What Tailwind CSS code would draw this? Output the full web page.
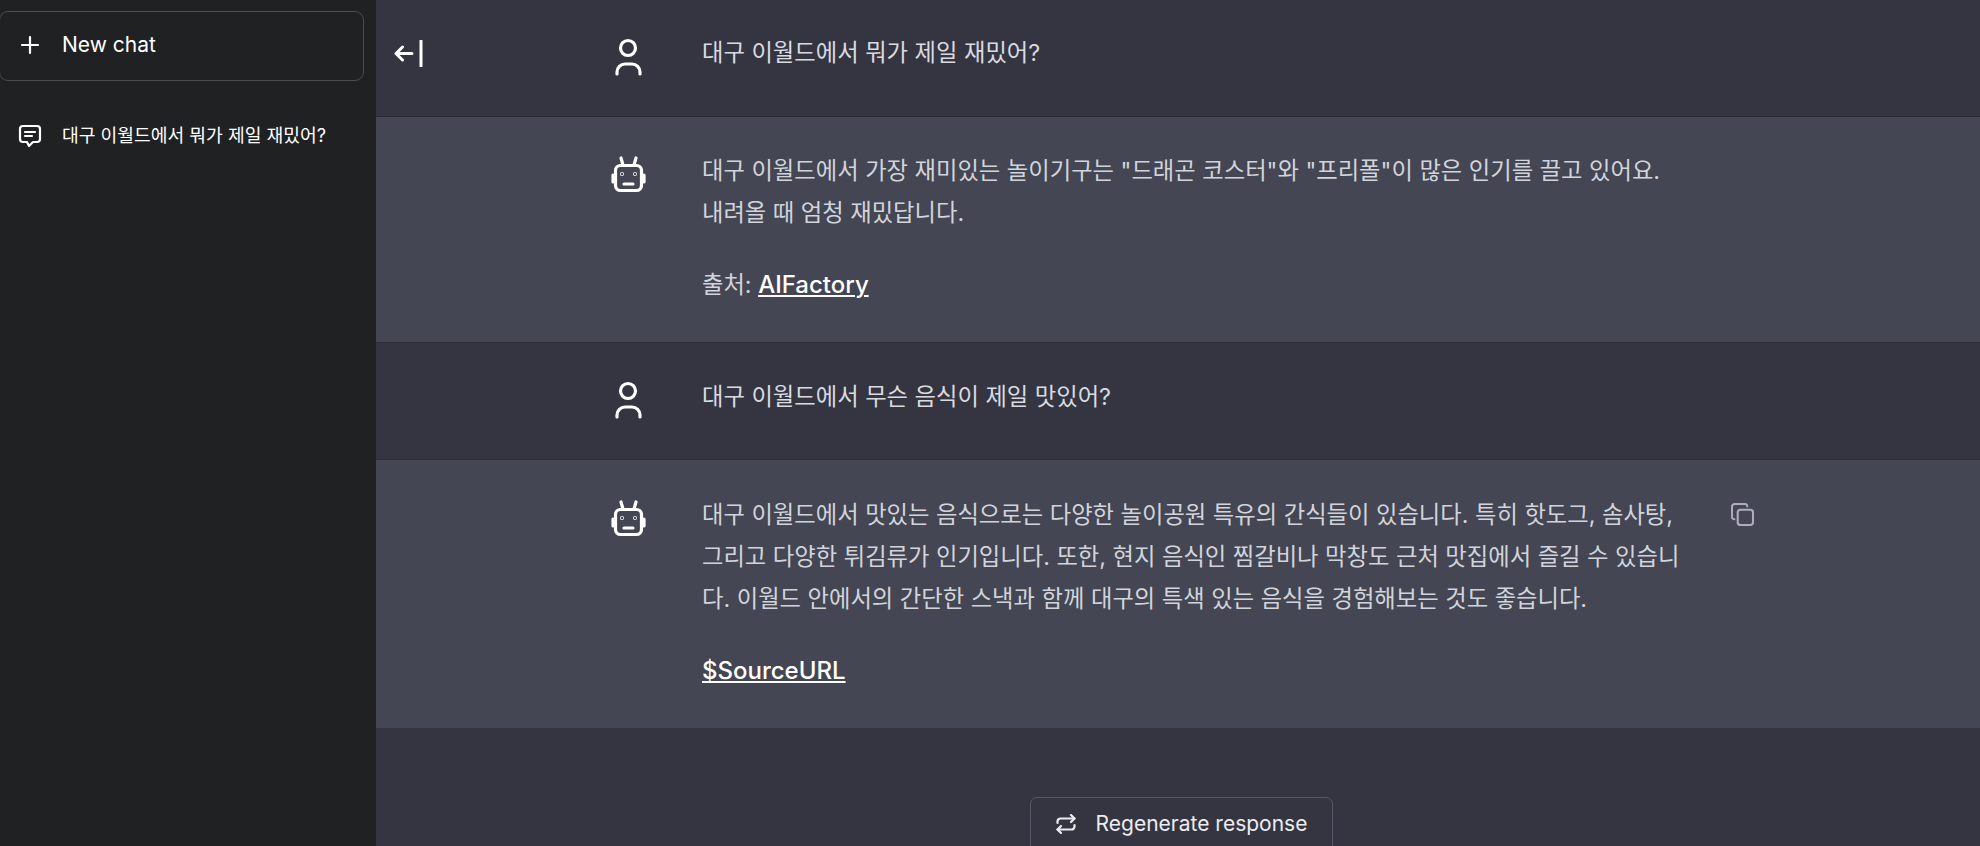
<!DOCTYPE html>
<html lang="ko">
<head>
  <meta charset="UTF-8" />
  <title>Chat</title>
  <script src="https://cdn.jsdelivr.net/npm/@tailwindcss/browser@4"></script>
</head>
<body class="h-[846px] overflow-hidden bg-[#343541] font-['Inter','Noto_Sans_CJK_KR',sans-serif]">
  <div class="flex h-[846px]">

    <!-- sidebar -->
    <aside class="w-[376px] shrink-0 bg-[#202123] text-white">
      <div class="pt-[11px] pr-[12px]">
        <button class="flex h-[70px] w-[365px] -ml-px items-center gap-[22px] rounded-[9px] border border-[#4d4d4f] pl-[20px] pb-[2px] text-[21px]">
          <svg class="w-[20px] h-[20px]" viewBox="0 0 20 20" fill="none" stroke="currentColor" stroke-width="2.200" stroke-linecap="round"><path d="M10 2v16M2 10h16"/></svg>
          New chat
        </button>
      </div>
      <div class="flex items-center gap-[20px] pl-[18px] pt-[41px] text-[18.200px]">
        <svg class="w-[24px] h-[24px]" viewBox="0 0 24 24" fill="none" stroke="currentColor" stroke-width="2.200" stroke-linecap="round" stroke-linejoin="round"><path d="M5 2h14a3 3 0 0 1 3 3v10a3 3 0 0 1-3 3h-4l-4 4-2-4H5a3 3 0 0 1-3-3V5a3 3 0 0 1 3-3z"/><path d="M7 8h10M7 12h7"/></svg>
        <span>대구 이월드에서 뭐가 제일 재밌어?</span>
      </div>
    </aside>

    <!-- main -->
    <main class="relative flex-1 min-w-0">
      <button class="absolute left-[18px] top-[40px] text-white">
        <svg class="w-[30px] h-[27px]" viewBox="0 0 30 27" fill="none" stroke="currentColor" stroke-width="3" stroke-linecap="round" stroke-linejoin="round"><path d="M18 13.500H2M8.500 7l-6.500 6.500 6.500 6.500"/><path d="M27 1v25"/></svg>
      </button>

      <section class="border-b border-[#2b2c36] h-[117px] pt-[32px]">
        <div class="mx-auto flex w-[1152px] text-[#d9dbe1]">
          <div class="w-[100px] shrink-0 pl-[8px] pt-[4px]">
            <svg class="w-[36px] h-[42px] text-white" viewBox="0 0 36 42" fill="none" stroke="currentColor" stroke-width="3.200" stroke-linecap="round"><circle cx="18" cy="12" r="7.500"/><path d="M7 38v-2a8 8 0 0 1 8-8h7a8 8 0 0 1 8 8v2"/></svg>
          </div>
          <p class="text-[23.300px] leading-[42px]">대구 이월드에서 뭐가 제일 재밌어?</p>
        </div>
      </section>

      <section class="border-b border-[#2b2c36] bg-[#444654] h-[226px] pt-[33px]">
        <div class="mx-auto flex w-[1152px] text-[#d1d5db]">
          <div class="w-[100px] shrink-0 pl-[8px] pt-[6px]">
            <svg class="w-[36px] h-[40px] text-white" viewBox="0 0 36 40" fill="none" stroke="currentColor" stroke-width="3.200" stroke-linecap="round" stroke-linejoin="round"><rect x="5.500" y="9.500" width="26" height="25" rx="5"/><path d="M11 2l2 7M26 2l-2 7M3 19v7M34 19v7M14 28h9"/><circle cx="12" cy="18" r="0.400" /><circle cx="25" cy="18" r="0.400"/></svg>
          </div>
          <div class="w-[983px] text-[23.300px] leading-[42px]">
            <p>대구 이월드에서 가장 재미있는 놀이기구는 "드래곤 코스터"와 "프리폴"이 많은 인기를 끌고 있어요. 내려올 때 엄청 재밌답니다.</p>
            <p class="mt-[30px]">출처: <a class="text-[24px] font-medium text-white underline decoration-2 underline-offset-2" href="#">AIFactory</a></p>
          </div>
        </div>
      </section>

      <section class="border-b border-[#2b2c36] h-[117px] pt-[33px]">
        <div class="mx-auto flex w-[1152px] text-[#d9dbe1]">
          <div class="w-[100px] shrink-0 pl-[8px] pt-[3px]">
            <svg class="w-[36px] h-[42px] text-white" viewBox="0 0 36 42" fill="none" stroke="currentColor" stroke-width="3.200" stroke-linecap="round"><circle cx="18" cy="12" r="7.500"/><path d="M7 38v-2a8 8 0 0 1 8-8h7a8 8 0 0 1 8 8v2"/></svg>
          </div>
          <p class="text-[23.300px] leading-[42px]">대구 이월드에서 무슨 음식이 제일 맛있어?</p>
        </div>
      </section>

      <section class="bg-[#444654] h-[268px] pt-[34px]">
        <div class="mx-auto flex w-[1152px] text-[#d1d5db]">
          <div class="w-[100px] shrink-0 pl-[8px] pt-[6px]">
            <svg class="w-[36px] h-[40px] text-white" viewBox="0 0 36 40" fill="none" stroke="currentColor" stroke-width="3.200" stroke-linecap="round" stroke-linejoin="round"><rect x="5.500" y="9.500" width="26" height="25" rx="5"/><path d="M11 2l2 7M26 2l-2 7M3 19v7M34 19v7M14 28h9"/><circle cx="12" cy="18" r="0.400" /><circle cx="25" cy="18" r="0.400"/></svg>
          </div>
          <div class="w-[983px] text-[23.300px] leading-[42px]">
            <p>대구 이월드에서 맛있는 음식으로는 다양한 놀이공원 특유의 간식들이 있습니다. 특히 핫도그, 솜사탕, 그리고 다양한 튀김류가 인기입니다. 또한, 현지 음식인 찜갈비나 막창도 근처 맛집에서 즐길 수 있습니다. 이월드 안에서의 간단한 스낵과 함께 대구의 특색 있는 음식을 경험해보는 것도 좋습니다.</p>
            <p class="mt-[30px]"><a class="text-[24px] font-medium text-white underline decoration-2 underline-offset-2" href="#">$SourceURL</a></p>
          </div>
          <div class="pl-[50px] pt-[9px]">
            <svg class="w-[23px] h-[23px] text-[#acacbe]" viewBox="0 0 24 24" fill="none" stroke="currentColor" stroke-width="2.200" stroke-linecap="round" stroke-linejoin="round"><rect x="7" y="7" width="16" height="16" rx="3"/><path d="M3.500 17A2.500 2.500 0 0 1 1 14.500V4a3 3 0 0 1 3-3h10.500A2.500 2.500 0 0 1 17 3.500"/></svg>
          </div>
        </div>
      </section>

      <div class="flex justify-center pt-[69px] pl-[7px]">
        <button class="flex h-[60px] w-[303px] items-start justify-center gap-[20px] rounded-[7px] border border-[#565869] pt-[10px] text-[21px] text-[#ececf1]">
          <svg class="mt-[6px] w-[20px] h-[20px]" viewBox="0 0 20 20" fill="none" stroke="currentColor" stroke-width="2.200" stroke-linecap="round" stroke-linejoin="round"><path d="M15 1l3.500 3.500L15 8"/><path d="M1.500 9V7.500a3 3 0 0 1 3-3h14"/><path d="M5 19l-3.500-3.500L5 12"/><path d="M18.500 11v1.500a3 3 0 0 1-3 3h-14"/></svg>
          Regenerate response
        </button>
      </div>
    </main>
  </div>
</body>
</html>
